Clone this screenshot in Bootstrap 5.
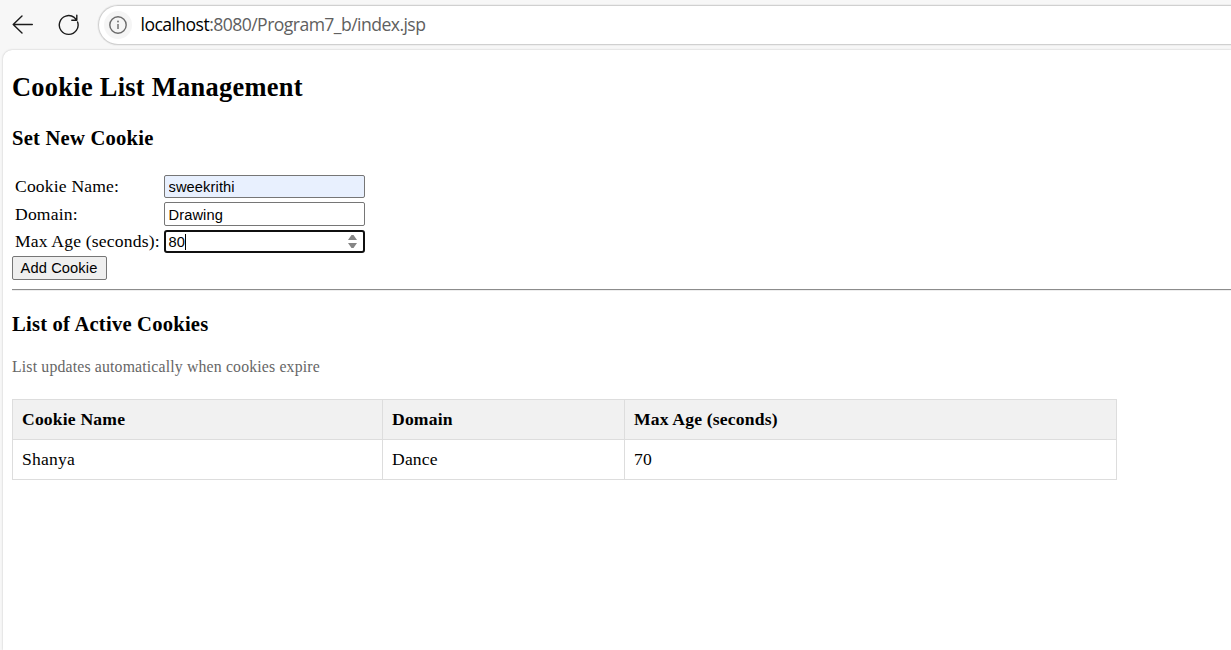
<!DOCTYPE html>
<html lang="en">
<head>
<meta charset="utf-8">
<meta name="viewport" content="width=device-width, initial-scale=1">
<title>Cookie List Management</title>
<link href="https://cdn.jsdelivr.net/npm/bootstrap@5.3.0/dist/css/bootstrap.min.css" rel="stylesheet">
<style>
body { background: #f7f7f7; color: #000; font-family: "Liberation Serif", serif; font-size: 17.6px; line-height: 20px; }
.toolbar { height: 50px; padding-left: 12px; }
.address { height: 40px; margin-left: 18px; padding-left: 5px; background: #fff; border: 1px solid #d0d0d0; border-right: 0; border-radius: 20px 0 0 20px; box-shadow: 0 0 0 1px #eee; font-family: "Open Sans", sans-serif; font-size: 17.6px; color: #606060; }
.info { width: 28px; height: 28px; background: #f5f5f5; }
.url { margin-left: 8.5px; padding-bottom: 2px; letter-spacing: -.56px; white-space: nowrap; }
.url b { font-weight: 400; color: #000; }
.sheet { margin-left: 3px; height: 600px; padding: 22px 0 0 9px; background: #fff; border-radius: 9px 0 0 0; box-shadow: 0 0 2px #bbb; }
h1 { font-size: 26.4px; line-height: 30px; font-weight: 700; margin: 0 0 24px; letter-spacing: .29px; }
h2 { font-size: 20.6px; line-height: 24px; font-weight: 700; margin: 0; letter-spacing: .22px; }
.fields { display: grid; grid-template-columns: 149px 201px; row-gap: 4px; margin: 25px 0 0 3px; }
.fields label { line-height: 22px; white-space: nowrap; letter-spacing: .17px; }
.fields label[for="domain"] { line-height: 24px; }
.field { height: 24px; border: 1px solid #767676; border-radius: 2px; padding: 1px 3px 0 3.5px; background: #fff; color: #000; font: 14.67px/21px "Liberation Sans", sans-serif; letter-spacing: .1px; width: 201px; }
.field.autofilled { height: 23px; padding-top: 0; background: #e8f0fe; }
.field.active { border: 2px solid #101010; border-radius: 3px; padding: 0 6px 0 2.5px; height: 23px; line-height: 19px; }
.field.active span:first-child { padding-top: 1px; letter-spacing: 0; }
.caret { width: 1px; height: 16px; background: #000; }
.add { display: block; width: 95px; height: 24px; margin-top: 3px; padding: 0 1px 0 0; border: 1px solid #767676; border-radius: 2px; background: #efefef; color: #000; font: 14.67px/22px "Liberation Sans", sans-serif; letter-spacing: .1px; }
.rule { height: 2px; margin: 9px 0 21px; border-top: 1px solid #8c8c8c; border-bottom: 1px solid #eee; }
.note { margin: 21px 0 0; font-size: 15.8px; line-height: 20px; color: #666; letter-spacing: .16px; }
.cookies { width: 1105px; margin: 22px 0 0; table-layout: fixed; border-collapse: collapse; letter-spacing: .18px; }
.cookies th, .cookies td { height: 40px; padding: 0 9px 2px; border: 1px solid #ddd; }
.cookies th { background: #f1f1f1; }
</style>
</head>
<body class="overflow-hidden">
<header class="toolbar d-flex align-items-center">
  <svg width="22" height="22" viewBox="0 0 22 22" fill="none" stroke="#1b1b1b" stroke-width="1.4" stroke-linecap="round" stroke-linejoin="round"><path d="M20.3 10.5H1.2M10 2L1.2 10.5L10 19"/></svg>
  <svg class="ms-4" width="22" height="22" viewBox="0 0 22 22" fill="none" stroke="#1b1b1b" stroke-width="1.4" stroke-linecap="round" stroke-linejoin="round"><path d="M19.6 8A9.4 9.4 0 1 1 16.2 3.4L18.8 6M18.8 1.2V6.2H13.8"/></svg>
  <div class="address d-flex align-items-center flex-grow-1">
    <span class="info rounded-circle d-flex align-items-center justify-content-center"><svg width="18" height="18" viewBox="0 0 18 18" fill="none" stroke="#6b6b6b" stroke-width="1.4"><circle cx="9" cy="9" r="8.2"/><path d="M9 8v5"/><circle cx="9" cy="5.5" r=".9" fill="#6b6b6b" stroke="none"/></svg></span>
    <span class="url"><b>localhost</b>:8080/Program7_b/index.jsp</span>
  </div>
</header>
<main class="sheet">
  <h1>Cookie List Management</h1>
  <h2>Set New Cookie</h2>
  <form>
    <div class="fields">
      <label for="cookieName">Cookie Name:</label>
      <input class="field autofilled" id="cookieName" type="text" value="sweekrithi">
      <label for="domain">Domain:</label>
      <input class="field" id="domain" type="text" value="Drawing">
      <label>Max Age (seconds):</label>
      <div class="field active d-flex align-items-center"><span>80</span><span class="caret"></span>
        <svg class="ms-auto" width="9" height="15" viewBox="0 0 9 15" fill="#858585"><path d="M0 6L3.5 1H5.5L9 6zM0 9H9L5.5 14H3.5z"/></svg>
      </div>
    </div>
    <button class="add" type="button">Add Cookie</button>
  </form>
  <div class="rule"></div>
  <h2>List of Active Cookies</h2>
  <p class="note">List updates automatically when cookies expire</p>
  <table class="cookies">
    <colgroup><col style="width:370px"><col style="width:242px"><col></colgroup>
    <thead><tr><th>Cookie Name</th><th>Domain</th><th>Max Age (seconds)</th></tr></thead>
    <tbody><tr><td>Shanya</td><td>Dance</td><td>70</td></tr></tbody>
  </table>
</main>
<script src="https://cdn.jsdelivr.net/npm/bootstrap@5.3.0/dist/js/bootstrap.bundle.min.js"></script>
</body>
</html>
